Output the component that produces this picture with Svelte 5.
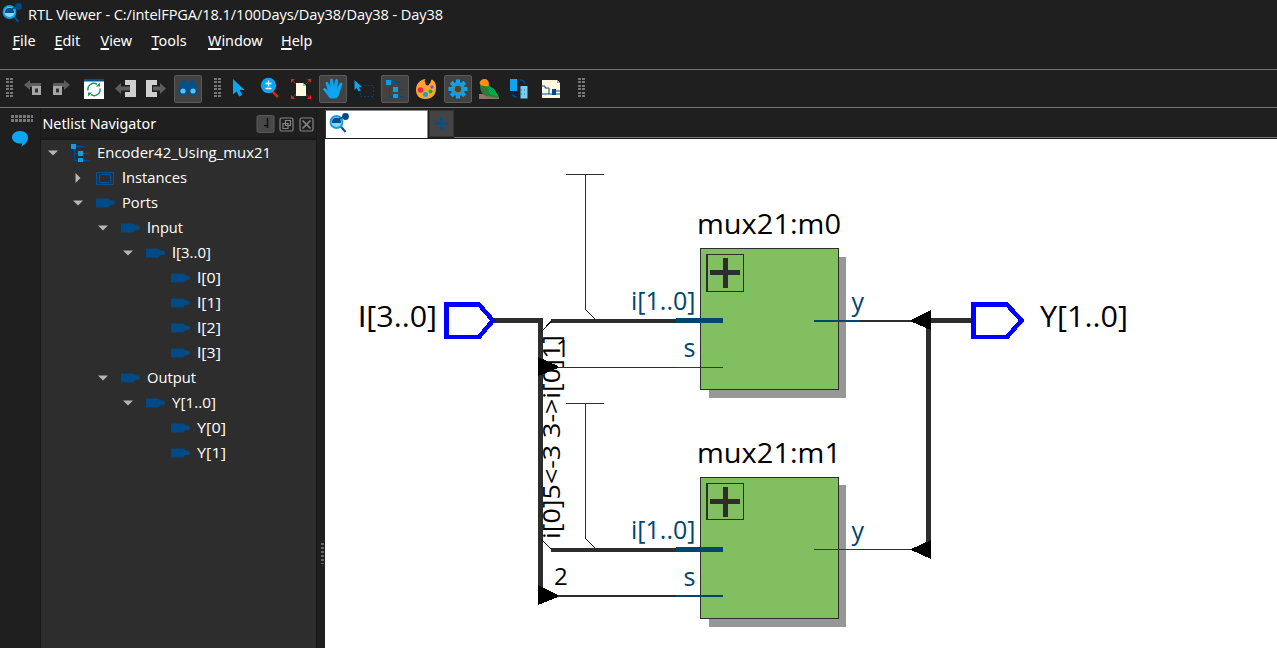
<script>
  const menus = [
    { t: 'File', w: 42 },
    { t: 'Edit', w: 46 },
    { t: 'View', w: 51 },
    { t: 'Tools', w: 56.5 },
    { t: 'Window', w: 73 },
    { t: 'Help', w: 40 }
  ];

  // gap: space before the item
  const tools = [
    { k: 'grip', gap: 6 },
    { k: 'back', gap: 6 },
    { k: 'forward', gap: -1 },
    { k: 'refresh', gap: 6 },
    { k: 'out', gap: 4 },
    { k: 'in', gap: 1 },
    { k: 'find', gap: 5, on: true },
    { k: 'grip', gap: 12 },
    { k: 'pointer', gap: 3 },
    { k: 'zoom', gap: 3 },
    { k: 'fit', gap: 4 },
    { k: 'hand', gap: 4, on: true },
    { k: 'select', gap: 2 },
    { k: 'tree', gap: 4, on: true },
    { k: 'palette', gap: 3 },
    { k: 'gear', gap: 4, on: true },
    { k: 'bird', gap: 3 },
    { k: 'swap', gap: 2 },
    { k: 'page', gap: 4 },
    { k: 'grip', gap: 13 }
  ];

  const rows = [
    { d: 0, t: 'Encoder42_Using_mux21', icon: 'tree', open: true, w: 174 },
    { d: 1, t: 'Instances', icon: 'inst', open: false, w: 65 },
    { d: 1, t: 'Ports', icon: 'port', open: true, w: 36 },
    { d: 2, t: 'Input', icon: 'port', open: true, w: 36 },
    { d: 3, t: 'I[3..0]', icon: 'port', open: true, w: 39 },
    { d: 4, t: 'I[0]', icon: 'port', w: 24 },
    { d: 4, t: 'I[1]', icon: 'port', w: 24 },
    { d: 4, t: 'I[2]', icon: 'port', w: 24 },
    { d: 4, t: 'I[3]', icon: 'port', w: 24 },
    { d: 2, t: 'Output', icon: 'port', open: true, w: 49 },
    { d: 3, t: 'Y[1..0]', icon: 'port', open: true, w: 44 },
    { d: 4, t: 'Y[0]', icon: 'port', w: 29 },
    { d: 4, t: 'Y[1]', icon: 'port', w: 29 }
  ];
  const gearTeeth = [0, 45, 90, 135, 180, 225, 270, 315];
</script>

{#snippet treeIcon()}
  <path d="M4 3.500H15M4.500 4V17.500H19M4 10.500H19" fill="none" stroke="#004a86" stroke-width="1" />
  <path d="M1 1h5v5h-5zM8 8h5v5h-5zM8 15h5v4h-5z" fill="#0a9fe6" />
{/snippet}

{#snippet viewerIcon()}
  <svg width="20" height="20" viewBox="0 0 20 20">
    <path d="M11.500 13l5 6" stroke="#00508f" stroke-width="2" />
    <circle cx="7.500" cy="9" r="6" fill="#8bd5f5" stroke="#10a0df" stroke-width="1.800" />
    <path d="M3 10V8a4.800 4.800 0 0 1 9 0v2z" fill="#00508f" />
    <path d="M10 6l6-3" stroke="#00508f" stroke-width="1.500" />
    <circle cx="16.500" cy="3.500" r="3.400" fill="#004a86" />
  </svg>
{/snippet}

{#snippet toolIcon(k)}
  <svg width="26" height="26" viewBox="0 0 26 26">
    {#if k === 'back'}
      <path d="M4 9l6-5v3h11v4h-11v3z" fill="#5d5d5d" />
      <path d="M12 10h9v9h-9z" fill="#a7a7a7" /><path d="M15 12.500h3v4h-3z" fill="#333" />
    {:else if k === 'forward'}
      <path d="M23 9l-6-5v3h-11v4h11v3z" fill="#5d5d5d" />
      <path d="M6 10h9v9h-9z" fill="#a7a7a7" /><path d="M9 12.500h3v4h-3z" fill="#333" />
    {:else if k === 'refresh'}
      <path d="M3 3h20v20h-20z" fill="#fff" /><path d="M3 3h20v2.500h-20z" fill="#00508f" />
      <path d="M7 14.500a6 6 0 0 1 9-6.200M19 12.500a6 6 0 0 1-9 6.200" fill="none" stroke="#179b5c" stroke-width="1.500" />
      <path d="M15 10.500h4V6.500zM11 16.500H7v4z" fill="#179b5c" />
    {:else if k === 'out'}
      <path d="M12 4h11v17h-11v-5h5v-7h-5z" fill="#d0d0d0" />
      <path d="M2 12.500l6-5.500v3.500h9v4h-9v3.500z" fill="#5d5d5d" />
    {:else if k === 'in'}
      <path d="M4 4h11v5h-5v7h5v5h-11z" fill="#d0d0d0" />
      <path d="M24 12.500l-6-5.500v3.500h-7v4h7v3.500z" fill="#5d5d5d" />
    {:else if k === 'find'}
      <path d="M7 4.500h4l2 3.500 2-3.500h4l3.500 10h-19z" fill="#00508f" />
      <circle cx="8" cy="14.500" r="4.800" fill="#00508f" /><circle cx="18" cy="14.500" r="4.800" fill="#00508f" />
      <circle cx="8" cy="15" r="2.600" fill="#5bc0ed" /><circle cx="18" cy="15" r="2.600" fill="#5bc0ed" />
    {:else if k === 'pointer'}
      <path d="M8 3v15.500l3.600-3 2.600 5 3-1.500-2.500-5h4.800z" fill="#0da5f2" />
    {:else if k === 'zoom'}
      <path d="M16 15l6 6" stroke="#b93512" stroke-width="2.500" />
      <circle cx="12.500" cy="9.500" r="7.700" fill="#0da5f2" />
      <path d="M9.500 7.500h6M12.500 4.500v6M9.500 12.500h6" stroke="#fff" stroke-width="1.400" />
    {:else if k === 'fit'}
      <path d="M4 4l18 18M22 4L4 22" stroke="#a51f22" stroke-width="1" />
      <path d="M3 3h4L3 7zM23 3v4l-4-4zM3 23v-4l4 4zM23 23h-4l4-4z" fill="#e32124" />
      <path d="M8 7h7l3 3v10H8z" fill="#fff7e0" /><path d="M15 7v3h3z" fill="#c9b999" />
    {:else if k === 'hand'}
      <path d="M9.500 21.500C7 18 5.500 15.500 3.200 13.500q.5-1.600 2.200-.8l3.200 2.200L5.800 7q.6-1.600 2-.4l2.800 6L10.500 3.500q1-1.200 2 0l1.200 8.200 2-8q1.500-1 2 .600L16.800 13l3.700-6q1.800-.5 1.600 1.200L19.500 15.500q-1 5-3 6.500h-6z" fill="#0da5f2" stroke="#0da5f2" stroke-width=".8" />
    {:else if k === 'select'}
      <path d="M10.500 9.500h13v11h-13z" fill="none" stroke="#0a3f70" stroke-dasharray="2 1.500" />
      <path d="M4.500 4v10l2.300-2 1.700 3.500 2-1-1.700-3.500h3z" fill="#0da5f2" />
    {:else if k === 'tree'}
      <g transform="translate(3 3)">{@render treeIcon()}</g>
    {:else if k === 'palette'}
      <path d="M13 3C8 3 3 7 3 14c0 5 3 9 9 9 9 0 11-6 11-11 0-4-1-7-4-8.500-2 0 0 5-4 4-4 0-4-4-2-4.500z" fill="#ffa628" />
      <circle cx="14.500" cy="7.500" r="2" fill="#252525" />
      <circle cx="7.500" cy="14" r="2.700" fill="#f02059" /><circle cx="12.500" cy="18.500" r="2.500" fill="#139fe8" />
      <circle cx="17.500" cy="15.500" r="2" fill="#08b64b" /><circle cx="19" cy="11" r="1.700" fill="#8d47e9" />
    {:else if k === 'gear'}
      {#each gearTeeth as a}
        <rect x="11" y="3.500" width="4" height="5" fill="#0da5f2" transform="rotate({a} 13 13)" />
      {/each}
      <circle cx="13" cy="13" r="5.200" fill="#424242" stroke="#0d9fe8" stroke-width="3.500" />
      <circle cx="13" cy="13" r="3.800" fill="none" stroke="#847c3c" />
    {:else if k === 'bird'}
      <path d="M3 18h12l8 3v2H3z" fill="#927466" />
      <path d="M4 9c0 7 3 11 9 11.500L23 22 12 8z" fill="#31783a" />
      <path d="M10 8l8 5 5 8-9-3z" fill="#00b050" /><path d="M10 9l9 9" stroke="#1b7937" />
      <path d="M3.500 7Q5 2.500 9 3q4 .5 4 6l-1.500 1.500L5 9.500z" fill="#ff920c" />
    {:else if k === 'swap'}
      <path d="M4 3h7v12H4z" fill="#0da5f2" />
      <path d="M14.500 10h7v12.500h-7z" fill="#79cdf2" /><path d="M15 14h6M15 18h6" stroke="#24749c" stroke-dasharray="1 2" />
      <path d="M14 4q4 0 5 4M11 21q-4 0-5-3" fill="none" stroke="#004a86" stroke-width="1.500" />
    {:else if k === 'page'}
      <path d="M4 4h15l3 3v15H4z" fill="#fff7e0" /><path d="M19 4v3h3z" fill="#c9a17f" />
      <path d="M4 10h3v2h4v6h11M4 18h7M17 15h5" fill="none" stroke="#00508f" />
      <path d="M14 13h4v6h-4z" fill="#004a86" />
    {/if}
  </svg>
{/snippet}

{#snippet mux(name, y, dy)}
  <text x="697" y={y - 14} font-size="28" textLength="144" lengthAdjust="spacingAndGlyphs">{name}</text>
  <rect x="709" y={y + 9 - dy} width="137" height={141 + dy} fill="#979797" />
  <rect x="700.500" y={y + 0.5} width="138" height="141" fill="#82bf60" stroke="#2d2d2d" />
  <rect x="706.500" y={y + 6.5} width="37" height={37 - dy} fill="none" stroke="#2d2d2d" />
  <path d="M707.500 {y + 6}v{38 - dy}" stroke="#2d2d2d" />
  <path d="M710 {y + 24.5}h30M725.500 {y + 10}v30" stroke="#2d2d2d" stroke-width="5" />
  <text class="pin" x="631" y={y + 62} font-size="25" textLength="64.500" lengthAdjust="spacingAndGlyphs">i[1..0]</text>
  <text class="pin" x="683.500" y={y + 109} font-size="25">s</text>
  <text class="pin" x="851.500" y={y + 63} font-size="25">y</text>
{/snippet}

<div class="app">
  <header class="title">
    <span class="logo">{@render viewerIcon()}</span>
    <span class="caption">RTL Viewer - C:/intelFPGA/18.1/100Days/Day38/Day38 - Day38</span>
  </header>
  <nav class="menu">
    {#each menus as m}
      <span style="width:{m.w}px"><u>{m.t[0]}</u>{m.t.slice(1)}</span>
    {/each}
  </nav>
  <div class="toolbar">
    {#each tools as t}
      {#if t.k === 'grip'}
        <i class="grip" style="margin-left:{t.gap}px"></i>
      {:else}
        <span class="tool" class:on={t.on} style="margin-left:{t.gap}px">{@render toolIcon(t.k)}</span>
      {/if}
    {/each}
  </div>
  <main>
    <aside class="rail">
      <i class="hgrip"></i>
      <svg width="18" height="18" viewBox="0 0 18 18"><path d="M9 1c5 0 8 3 8 6.500 0 4-3 7-7 9.500 1-1.500 1.300-2.500 1-3.500C5 14 1 11 1 7.500 1 4 4 1 9 1z" fill="#0da5f2" /></svg>
    </aside>
    <section class="dock">
      <div class="dockhead">
        <span>Netlist Navigator</span>
        <svg width="60" height="20" viewBox="0 0 60 20">
          <rect x="1" y="1.500" width="17" height="17" rx="1.500" fill="#484848" stroke="#5a5a5a" />
          <path d="M11.500 4v10M8 11.500h4" stroke="#111" stroke-width="1.500" /><path d="M9.500 4v7" stroke="#34536a" />
          <g fill="none" stroke="#858585" stroke-width="1.200"><rect x="24" y="4" width="13" height="13" rx="1.500" /><path d="M29.500 6.500h5v5h-5zM27 9.500h5v5h-5z" />
          <rect x="44" y="4" width="13" height="13" rx="1.500" /><path d="M46.500 6.500l8 8M54.500 6.500l-8 8" stroke-width="1.700" /></g>
        </svg>
      </div>
      <div class="tree">
        {#each rows as r}
          <div class="row" style="padding-left:{6 + r.d * 25}px">
            <svg class="arrow" width="12" height="12" viewBox="0 0 12 12">
              {#if r.open === true}<path d="M1 3.500h10L6 8.500z" fill="#b5b5b5" />{/if}
              {#if r.open === false}<path d="M3.500 1v10l5-5z" fill="#b5b5b5" />{/if}
            </svg>
            <svg class="node" width="22" height="20" viewBox="0 0 22 20">
              {#if r.icon === 'tree'}{@render treeIcon()}
              {:else if r.icon === 'inst'}<path d="M1.500 4.500h17v12h-17zM4.500 6.500h11v8h-11z" fill="none" stroke="#00559a" />
              {:else}<path d="M1 5.500h12l3 2h2l2 1.500v2l-2 1h-2l-3 2.500H1z" fill="#004a86" />{/if}
            </svg>
            <svg class="label" width={r.w + 4} height="24"><text x="0" y="17" textLength={r.w} lengthAdjust="spacingAndGlyphs"><tspan class:bare={r.t[0] === 'I'}>{r.t[0]}</tspan>{r.t.slice(1)}</text></svg>
          </div>
        {/each}
      </div>
    </section>
    <div class="splitter"><i></i></div>
    <section class="work">
      <div class="tabs">
        <div class="tab">{@render viewerIcon()}</div>
        <div class="add"><svg width="13" height="13"><path d="M0 6.500h13M6.500 0v13" stroke="#00508f" stroke-width="2.400" /></svg></div>
        <div class="rest"></div>
      </div>
      <svg class="schematic" width="952" height="509" viewBox="325 139 952 509">
        {@render mux('mux21:m0', 248, 0)}
        {@render mux('mux21:m1', 477, 1)}
        <g shape-rendering="crispEdges" fill="none" stroke="#2d2d2d">
          <path d="M566 174.500h38M585.500 174v136M566 403.500h38M585.500 403v136M551 367.500H676M860 549.500H912" />
          <path d="M558 596H676M860 321H912" stroke-width="2" />
          <path d="M551 321H676M551 550H676" stroke-width="4" />
          <path d="M494 320.500H540.500V596M972 320.500H928.500V549" stroke-width="5" />
          <path d="M585.500 309.500l10 10M541 332l10.500-11M585.500 538.500l10 10M541 539l10.500 10.500" stroke="#111" />
        </g>
        <g shape-rendering="crispEdges" fill="none" stroke="#00466f">
          <path d="M676 320.500h47M676 549.500h47" stroke-width="5" />
          <path d="M676 596h47M814 321h46" stroke-width="2" />
          <path d="M676 367.500h47M814 549.500h46" />
        </g>
        <g shape-rendering="crispEdges">
          <path d="M538 357l20 9v2l-20 8zM538 585l20 10v2l-20 8zM931 310v20l-20-8.500v-1.500zM931 540v19l-20-9v-1z" />
          <path d="M446.500 304.500h32.500l14 16L479 337h-32.500zM973.500 304.500h33.500l14.500 16L1007 337h-33.500z" fill="#fff" stroke="#00f" stroke-width="4.500" />
        </g>
        <text x="358" y="327" font-size="29" textLength="79" lengthAdjust="spacingAndGlyphs"><tspan class="bare">I</tspan>[3..0]</text>
        <text x="1040" y="327" font-size="29" textLength="88" lengthAdjust="spacingAndGlyphs">Y[1..0]</text>
        <text x="556" y="357" font-size="24">1</text>
        <text x="554" y="585" font-size="24">2</text>
        <text transform="translate(560 539) rotate(-90)" font-size="24" textLength="204" lengthAdjust="spacingAndGlyphs">i[0]5&lt;-3 3-&gt;i[0]1]</text>
      </svg>
    </section>
  </main>
</div>

<style>
  :global(body) { margin: 0; background: #1f1f1f; }
  .app { width: 1277px; height: 648px; overflow: hidden; display: flex; flex-direction: column; background: #1f1f1f; color: #fff; font-family: "Open Sans", "Noto Sans", sans-serif; font-size: 15px; }
  svg { display: block; flex: none; }
  .bare { font-family: Roboto, Lato, sans-serif; }
  .title { height: 28px; display: flex; align-items: flex-start; box-sizing: border-box; padding: 3px 0 0 2px; }
  .logo { width: 26px; }
  .caption { font-size: 14.600px; line-height: 22px; white-space: nowrap; letter-spacing: -0.080px; }
  .menu { height: 41px; display: flex; padding-left: 12.500px; line-height: 25px; border-bottom: 1px solid #747474; white-space: nowrap; font-family: "Noto Sans", sans-serif; font-size: 14.400px; }
  .menu span { display: block; flex: none; }
  .menu u { text-underline-offset: 2px; text-decoration-thickness: 1.500px; }
  .toolbar { height: 37px; flex: none; display: flex; align-items: center; border-bottom: 1px solid #747474; }
  .tool { width: 28px; height: 28px; box-sizing: border-box; display: flex; align-items: center; justify-content: center; flex: none; }
  .tool.on { background: #424242; border: 1px solid #5a5a5a; border-radius: 2px; }
  .grip { width: 7px; height: 21px; flex: none; background: repeating-linear-gradient(#0000 0 2px, #1f1f1f 2px 3.500px), linear-gradient(90deg, #777 3px, #0000 3px 4px, #777 4px 7px); }
  main { flex: 1; display: flex; min-height: 0; }
  .rail { width: 40px; flex: none; display: flex; flex-direction: column; align-items: center; padding-top: 7px; gap: 8px; box-sizing: border-box; }
  .hgrip { width: 22px; height: 7px; margin-left: 4px; background: linear-gradient(#0000 3px, #1f1f1f 3px 4px, #0000 4px), repeating-linear-gradient(90deg, #777 0 3px, #0000 3px 4px); }
  .dock { width: 277px; flex: none; display: flex; flex-direction: column; }
  .dockhead { height: 31px; box-sizing: border-box; display: flex; justify-content: space-between; align-items: center; padding: 1px 0 0 1.500px; border: 1px solid #191919; border-top: 0; }
  .dockhead span { font-family: "Noto Sans", sans-serif; font-size: 14.300px; line-height: 28px; }
  .tree { flex: 1; background: #2d2d2d; border: 1px solid #171717; border-bottom: 0; box-sizing: border-box; }
  .row { height: 25px; display: flex; align-items: center; }
  .node { margin-left: 11px; }
  .label { margin-left: 5px; fill: #fff; font-size: 15px; }
  .splitter { width: 8px; flex: none; display: flex; flex-direction: column; align-items: center; }
  .splitter i { width: 3px; height: 21px; margin: 435px 0 0 3px; background: repeating-linear-gradient(#686868 0 2px, #0000 2px 4px); }
  .work { flex: 1; min-width: 0; display: flex; flex-direction: column; }
  .tabs { height: 31px; flex: none; display: flex; box-sizing: border-box; padding-top: 2px; }
  .tab { width: 103px; height: 28px; background: #fff; border: 1px solid #888; border-left-color: #333; border-bottom: 0; box-sizing: border-box; padding: 2px 0 0 3px; }
  .add { width: 25px; height: 27px; margin: 0 0 0 1px; background: #444; border: 1px solid #333; box-sizing: border-box; display: flex; align-items: center; justify-content: center; }
  .rest { flex: 1; height: 28px; border-bottom: 1px solid #777; box-sizing: border-box; }
  .schematic { background: #fff; fill: #000; }
  .pin { fill: #00466f; }
</style>
